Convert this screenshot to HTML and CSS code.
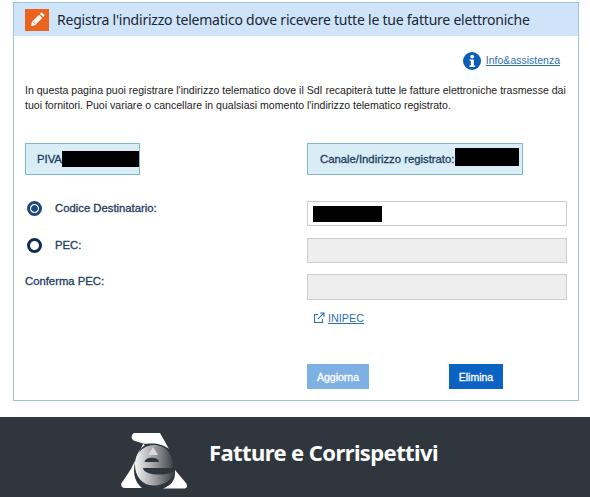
FILE: index.html
```html
<!DOCTYPE html>
<html>
<head>
    <meta name="viewport" content="width=device-width, initial-scale=1.0">
    <title>Fatture e Corrispettivi</title>
    <link rel="stylesheet" href="styles.css">
</head>
<body>
    <div class="panelDiv">
        <div class="panelHead">
            <span class="editIcon">
                <svg width="15" height="15" viewBox="0 0 16 16">
                    <path d="M1 15l1-4.4 7.6-7.6 3.4 3.4-7.6 7.6z" fill="#fff"/>
                    <path d="M10.6 2l1-1a1.2 1.2 0 0 1 1.7 0l1.7 1.7a1.2 1.2 0 0 1 0 1.7l-1 1z" fill="#fff"/>
                    <path d="M3.4 10.4l2.2 2.2" stroke="#e8641f" stroke-width="0.9"/>
                </svg>
            </span>
            <h1 class="panelTitle">Registra l'indirizzo telematico dove ricevere tutte le tue fatture elettroniche</h1>
        </div>

        <div class="panelBody">
            <div class="infoRow">
                <svg class="infoIcon" width="18" height="18" viewBox="0 0 18 18">
                    <circle cx="9" cy="9" r="9" fill="#0b5fb5"/>
                    <circle cx="9.2" cy="4.6" r="1.9" fill="#fff"/>
                    <path d="M6.6 7.4h4.2v6h1.4v1.7H6.4v-1.7h1.4V9.1H6.6z" fill="#fff"/>
                </svg>
                <a class="infoLink" href="#">Info&amp;assistenza</a>
            </div>

            <p class="introText">In questa pagina puoi registrare l'indirizzo telematico dove il SdI recapiterà tutte le fatture elettroniche trasmesse dai tuoi fornitori. Puoi variare o cancellare in qualsiasi momento l'indirizzo telematico registrato.</p>

            <div class="formGrid">
                <div class="infoBox pivaBox">
                    <span>PIVA</span>
                    <span class="blackedOut pivaBlack"></span>
                </div>
                <div class="infoBox canaleBox">
                    <span>Canale/Indirizzo registrato:</span>
                    <span class="blackedOut canaleBlack"></span>
                </div>

                <label class="fieldLabel">
                    <span class="radioBtn radioOn"></span>
                    Codice Destinatario:
                </label>
                <div class="textField">
                    <span class="blackedOut codeBlack"></span>
                </div>

                <label class="fieldLabel pecLabel">
                    <span class="radioBtn"></span>
                    PEC:
                </label>
                <div class="textField fieldOff pecField"></div>

                <label class="fieldLabel confirmLabel">Conferma PEC:</label>
                <div class="textField fieldOff confirmField"></div>

                <div></div>
                <div class="inipecRow">
                    <svg width="12" height="12" viewBox="0 0 12 12" fill="none" stroke="#2f6fae" stroke-width="1.1">
                        <path d="M9.5 7v3.5h-8v-8H5"/>
                        <path d="M4.8 7.2L10.8 1.2M7.2 1h3.8v3.8"/>
                    </svg>
                    <a class="inipecLink" href="#">INIPEC</a>
                </div>

                <div class="buttonRow">
                    <input type="button" class="actionBtn updateBtn" value="Aggiorna">
                    <input type="button" class="actionBtn deleteBtn" value="Elimina">
                </div>
            </div>
        </div>
    </div>

    <div class="footerDiv">
        <svg class="footerLogo" width="68" height="58" viewBox="0 0 68 58">
            <defs>
                <linearGradient id="eGrad" x1="0" x2="1" y1="0" y2="0">
                    <stop offset="0" stop-color="#f6f6f6"/>
                    <stop offset="0.5" stop-color="#9a9c9f"/>
                    <stop offset="1" stop-color="#34393f"/>
                </linearGradient>
            </defs>
            <path d="M14 1H40L49 17C45 13.5 38 11.5 32 11.5C28 11.5 26 12 23 11.5L15 9C11 8 10.5 3 14 1z" fill="#fff"/>
            <path d="M23 12L11 37L3 49C0 52 1 56 5 56H22C15 50 13 42 14.5 33C15.5 25 18 18 25 13z" fill="#fff"/>
            <path d="M55 38L66 51C68 54 67 56.5 64 56.5H43C50 54 56 49 55 38z" fill="#fff"/>
            <path d="M34 13C46 13 53 22 53 36H23C23 39 28 42 36 42.5C43 43 49 42 55 39C53 47 44 54 33 53.5C22 53 15 44 15 33C15 22 23 13 34 13z" fill="url(#eGrad)"/>
            <path d="M24.5 30C25 25 38 24 39 30z" fill="#2f363d"/>
            <path d="M33 15L38 23H28z" fill="#d8d8d8"/>
        </svg>
        <span class="footerTitle">Fatture e Corrispettivi</span>
    </div>
</body>
</html>
```

FILE: styles.css
```css
body {
    margin: 0;
    padding: 0;
    background-color: white;
    font-family: "Liberation Sans", Arial, sans-serif;
    font-size: 11.3px;
    color: #1d3b5e;
}
.panelDiv {
    height: 399px;
    margin: 2px 11px 0 13px;
    box-sizing: border-box;
    border: 1px solid #9fc3da;
}
.panelHead {
    display: flex;
    align-items: center;
    height: 33px;
    padding-left: 11px;
    background-color: #cfe4f9;
}
.editIcon {
    display: flex;
    justify-content: center;
    align-items: center;
    width: 24px;
    height: 22px;
    margin-right: 8px;
    background-color: #e8641f;
}
.panelTitle {
    margin: 0;
    font-family: "Noto Sans", sans-serif;
    font-size: 14px;
    font-weight: normal;
    letter-spacing: -0.23px;
    color: #1b2733;
}
.panelBody {
    padding: 15px 11px 0 11px;
}
.infoRow {
    display: flex;
    justify-content: flex-end;
    align-items: center;
    height: 20px;
    padding-right: 7px;
}
.infoIcon {
    margin-right: 5px;
}
.infoLink, .inipecLink {
    color: #2f6fae;
}
.infoLink {
    margin-bottom: 2px;
    font-size: 10.5px;
}
.introText {
    margin: 12px 0 0 0;
    font-size: 10.56px;
    line-height: 15px;
    color: #222;
}
.formGrid {
    display: grid;
    grid-template-columns: 282px 260px;
    margin-top: 30px;
}
.infoBox {
    display: flex;
    align-items: center;
    height: 32px;
    box-sizing: border-box;
    border: 1px solid #7fb8cc;
    background-color: #d9edf7;
    white-space: nowrap;
    -webkit-text-stroke: 0.3px;
}
.pivaBox {
    width: 115px;
    padding-left: 11px;
}
.canaleBox {
    width: 216px;
    padding-left: 12px;
    margin-bottom: 26px;
}
.blackedOut {
    display: block;
    background-color: black;
}
.pivaBlack {
    width: 77px;
    height: 16px;
}
.canaleBlack {
    width: 64px;
    height: 18px;
    margin-left: 1px;
    margin-bottom: 5px;
}
.codeBlack {
    width: 69px;
    height: 16px;
}
.fieldLabel {
    display: flex;
    align-items: flex-start;
    height: 37px;
    line-height: 15px;
    -webkit-text-stroke: 0.3px;
}
.pecLabel {
    height: 36px;
}
.radioBtn {
    display: block;
    width: 15px;
    height: 15px;
    margin: 0 13px 0 2px;
    box-sizing: border-box;
    border: 3px solid #0d2c5a;
    border-radius: 50%;
}
.radioOn {
    border-color: #1c4a80;
    background: radial-gradient(circle, #1c4a80 0 3px, white 3.5px);
}
.textField {
    display: flex;
    align-items: center;
    height: 25px;
    margin-bottom: 12px;
    padding-left: 5px;
    box-sizing: border-box;
    border: 1px solid #cccccc;
}
.fieldOff {
    background-color: #eeeeee;
}
.pecField {
    margin-bottom: 11px;
}
.confirmField {
    height: 26px;
    margin-bottom: 10px;
}
.inipecRow {
    display: flex;
    align-items: center;
    gap: 3px;
    height: 14px;
    padding-left: 6px;
}
.inipecLink {
    font-size: 10.8px;
}
.buttonRow {
    grid-column: 2;
    display: flex;
    margin-top: 39px;
}
.actionBtn {
    height: 25px;
    margin: 0;
    border: none;
    font-family: "Liberation Sans", Arial, sans-serif;
    font-size: 10.5px;
    color: white;
    -webkit-text-stroke: 0.3px;
}
.updateBtn {
    width: 62px;
    margin-right: 80px;
    background-color: #7fb0e3;
}
.deleteBtn {
    width: 54px;
    background-color: #0a63c2;
}
.footerDiv {
    display: flex;
    align-items: flex-start;
    height: 80px;
    margin-top: 16px;
    padding: 15px 0 0 120px;
    box-sizing: border-box;
    background-color: #2f363d;
}
.footerLogo {
    margin-right: 21px;
}
.footerTitle {
    margin-top: 5px;
    font-family: "Noto Sans", sans-serif;
    font-size: 22px;
    font-weight: bold;
    line-height: 30px;
    letter-spacing: -0.6px;
    color: white;
}
```
